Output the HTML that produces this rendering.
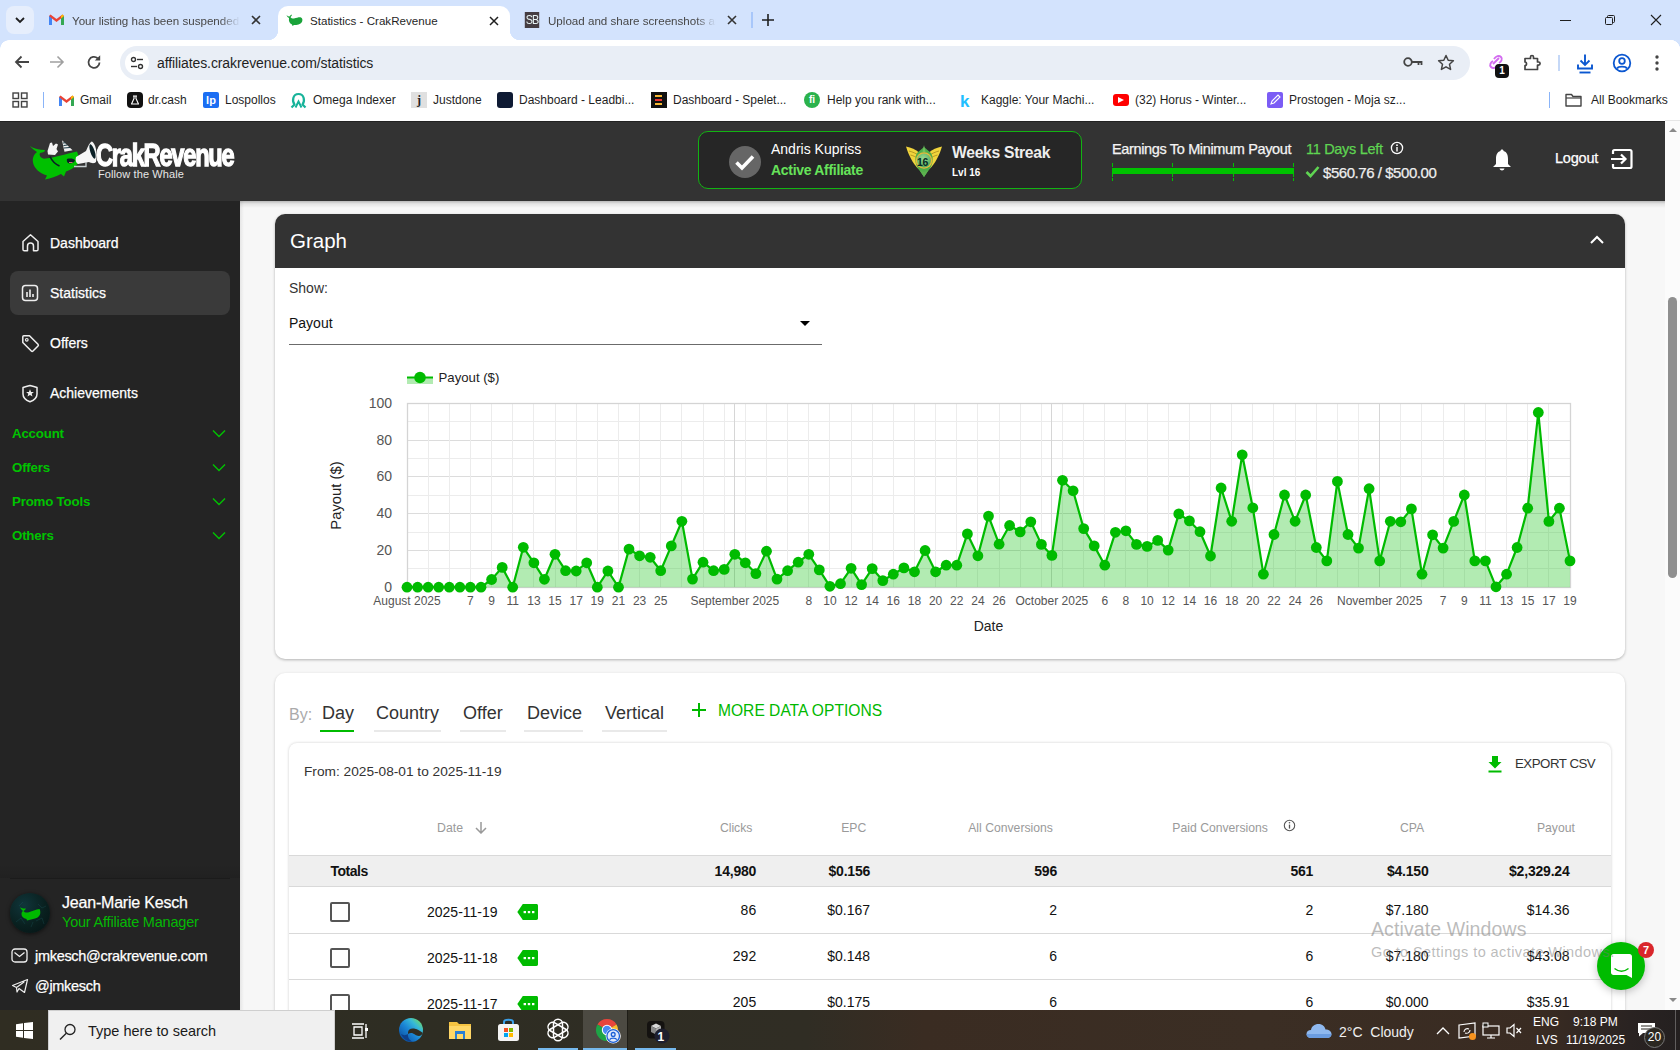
<!DOCTYPE html>
<html><head><meta charset="utf-8"><title>Statistics - CrakRevenue</title>
<style>
*{box-sizing:border-box;margin:0;padding:0}
html,body{width:1680px;height:1050px;overflow:hidden;font-family:"Liberation Sans",sans-serif;background:#f7f7f7}
.abs{position:absolute}
.t{position:absolute;white-space:nowrap;line-height:1}
#tabs{position:absolute;left:0;top:0;width:1680px;height:40px;background:#d3e3fd}
#toolbar{position:absolute;left:0;top:40px;width:1680px;height:44px;background:#fff}
#bm{position:absolute;left:0;top:84px;width:1680px;height:37px;background:#fff}
#hdr{position:absolute;left:0;top:121px;width:1665px;height:80px;background:#333;border-top:1px solid #222;z-index:2}
#side{position:absolute;left:0;top:200px;width:240px;height:810px;background:#242424}
#main{position:absolute;left:240px;top:200px;width:1425px;height:810px;background:#f7f7f7;overflow:hidden}
#sb{position:absolute;left:1665px;top:120px;width:15px;height:890px;background:#fbfbfb;border-top:1px solid #e6e6e6}
#task{position:absolute;left:0;top:1010px;width:1680px;height:40px;background:linear-gradient(90deg,#302d22 0%,#2e2d23 25%,#302d24 48%,#3a2c22 55%,#3b2e24 75%,#392b22 92%,#2a2322 97%,#242020 100%)}
.tabtxt{font-size:11.6px;color:#1f1f1f}
.bmt{font-size:12px;color:#1f1f1f}
.wh{color:#fff}
.grn{color:#00b400}
.med{-webkit-text-stroke:0.25px currentColor}
</style></head><body>

<div id="tabs">
  <div class="abs" style="left:6px;top:6px;width:28px;height:28px;border-radius:8px;background:#e6eefc"></div>
  <svg class="abs" style="left:13px;top:13px" width="14" height="14" viewBox="0 0 14 14"><path d="M3 5 L7 9 L11 5" fill="none" stroke="#1f1f1f" stroke-width="1.8"/></svg>
  <!-- tab1 -->
  <svg class="abs" style="left:49px;top:14px" width="15" height="12" viewBox="0 0 15 12"><path d="M0 2v9h3V4.5L7.5 8 12 4.5V11h3V2l-1.5-1.5L7.5 5 1.5.5z" fill="#ea4335"/><path d="M0 2v9h3V4.5z" fill="#4285f4"/><path d="M12 4.5V11h3V2z" fill="#34a853"/><path d="M12 4.5L15 2 13.5.5 12 1.7z" fill="#fbbc04"/></svg>
  <div class="t tabtxt" style="left:72px;top:15px;color:#474747;width:168px;overflow:hidden;-webkit-mask-image:linear-gradient(90deg,#000 88%,transparent)">Your listing has been suspended</div>
  <svg class="abs" style="left:250px;top:14px" width="12" height="12" viewBox="0 0 12 12"><path d="M2 2L10 10M10 2L2 10" stroke="#333" stroke-width="1.6"/></svg>
  <!-- active tab -->
  <div class="abs" style="left:278px;top:6px;width:232px;height:40px;background:#fff;border-radius:10px 10px 0 0"></div>
  <div class="abs" style="left:268px;top:30px;width:10px;height:10px;background:radial-gradient(circle at 0 0,#d3e3fd 10px,#fff 10.5px)"></div>
  <div class="abs" style="left:510px;top:30px;width:10px;height:10px;background:radial-gradient(circle at 100% 0,#d3e3fd 10px,#fff 10.5px)"></div>
  <svg class="abs" style="left:286px;top:14px" width="17" height="12" viewBox="0 0 17 12"><path d="M0.5 1 C1.5 2 2.5 2.5 3.5 2.5 C4.5 1 5.5 0.5 6 1 C5.5 2 5 2.5 4.5 3 C5 4 6 4.5 8 4.5 C11 4 13 3 15 3.5 C16.5 4 16.8 6 16 8 C14.5 10.5 11 11 8 11 L6.5 12 L6 10.5 C3.5 9.5 2.5 7 3 4 C2 3.5 1 2.5 0.5 1Z" fill="#1aa33a"/></svg>
  <div class="t tabtxt" style="left:310px;top:15px">Statistics - CrakRevenue</div>
  <svg class="abs" style="left:488px;top:15px" width="12" height="12" viewBox="0 0 12 12"><path d="M2 2L10 10M10 2L2 10" stroke="#1f1f1f" stroke-width="1.5"/></svg>
  <!-- tab3 -->
  <div class="abs" style="left:524px;top:12px;width:16px;height:16px;background:#453d42;color:#e8f4f4;font:12px 'Liberation Sans',sans-serif;line-height:16px;text-align:center;letter-spacing:-1.2px;transform:scaleX(0.9)">SB</div>
  <div class="t tabtxt" style="left:548px;top:15px;color:#474747;width:168px;overflow:hidden;-webkit-mask-image:linear-gradient(90deg,#000 88%,transparent)">Upload and share screenshots and images</div>
  <svg class="abs" style="left:726px;top:14px" width="12" height="12" viewBox="0 0 12 12"><path d="M2 2L10 10M10 2L2 10" stroke="#333" stroke-width="1.6"/></svg>
  <div class="abs" style="left:751px;top:12px;width:1.5px;height:16px;background:#a8c7fa"></div>
  <svg class="abs" style="left:761px;top:13px" width="14" height="14" viewBox="0 0 14 14"><path d="M7 1V13M1 7H13" stroke="#1f1f1f" stroke-width="1.6"/></svg>
  <!-- window controls -->
  <div class="abs" style="left:1560px;top:20px;width:11px;height:1px;background:#1f1f1f"></div>
  <svg class="abs" style="left:1604px;top:14px" width="12" height="12" viewBox="0 0 12 12"><rect x="1.5" y="3.5" width="7" height="7" rx="1" fill="none" stroke="#1f1f1f"/><path d="M3.5 3.5V2.5a1 1 0 0 1 1-1h5a1 1 0 0 1 1 1v5a1 1 0 0 1-1 1h-1" fill="none" stroke="#1f1f1f"/></svg>
  <svg class="abs" style="left:1650px;top:14px" width="12" height="12" viewBox="0 0 12 12"><path d="M1 1L11 11M11 1L1 11" stroke="#1f1f1f" stroke-width="1.1"/></svg>
</div>
<div id="toolbar">
  <div class="abs" style="left:0;top:0;width:9px;height:9px;background:radial-gradient(circle at 100% 100%,#fff 8.5px,#d3e3fd 9px)"></div>
  <div class="abs" style="left:1670px;top:0;width:10px;height:10px;background:radial-gradient(circle at 0 100%,#fff 10px,#d3e3fd 10.5px)"></div>
  <svg class="abs" style="left:13px;top:13px" width="18" height="18" viewBox="0 0 18 18"><path d="M16 9H3M8.5 3.5L3 9l5.5 5.5" fill="none" stroke="#444" stroke-width="1.8"/></svg>
  <svg class="abs" style="left:48px;top:13px" width="18" height="18" viewBox="0 0 18 18"><path d="M2 9H15M9.5 3.5L15 9l-5.5 5.5" fill="none" stroke="#a0a0a0" stroke-width="1.6"/></svg>
  <svg class="abs" style="left:85px;top:13px" width="18" height="18" viewBox="0 0 18 18"><path d="M14.5 9.5A5.5 5.5 0 1 1 12.6 5.2" fill="none" stroke="#444" stroke-width="1.8"/><path d="M15.2 2.2V7.6H9.8Z" fill="#444"/></svg>
  <div class="abs" style="left:120px;top:6px;width:1350px;height:34px;border-radius:17px;background:#e9eef6"></div>
  <div class="abs" style="left:125px;top:11px;width:24px;height:24px;border-radius:12px;background:#fff"></div>
  <svg class="abs" style="left:130px;top:16px" width="14" height="14" viewBox="0 0 14 14"><circle cx="3.5" cy="3.5" r="2" fill="none" stroke="#333" stroke-width="1.4"/><path d="M7 3.5H13" stroke="#333" stroke-width="1.4"/><path d="M1 10.5H7" stroke="#333" stroke-width="1.4"/><circle cx="10.5" cy="10.5" r="2" fill="none" stroke="#333" stroke-width="1.4"/></svg>
  <div class="t" style="left:157px;top:16px;font-size:14px;color:#1f1f1f;letter-spacing:-0.1px">affiliates.crakrevenue.com/statistics</div>
  <svg class="abs" style="left:1403px;top:15px" width="20" height="14" viewBox="0 0 20 14"><circle cx="5" cy="7" r="3.8" fill="none" stroke="#444" stroke-width="1.8"/><path d="M9 7H18.5V10M15.5 7V10" fill="none" stroke="#444" stroke-width="1.8"/></svg>
  <svg class="abs" style="left:1437px;top:14px" width="18" height="18" viewBox="0 0 18 18"><path d="M9 1.5l2.2 4.8 5.2.5-3.9 3.5 1.1 5.1L9 12.8 4.4 15.4l1.1-5.1L1.6 6.8l5.2-.5z" fill="none" stroke="#444" stroke-width="1.5" stroke-linejoin="round"/></svg>
  <svg class="abs" style="left:1487px;top:14px" width="18" height="16" viewBox="0 0 18 16"><path d="M7 5 C9 2 12 1 14 3 C16 5 14 8 12 9 M11 11 C9 14 6 15 4 13 C2 11 4 8 6 7 M6 10 L12 4" fill="none" stroke="#d36cf0" stroke-width="1.9"/></svg>
  <div class="abs" style="left:1495px;top:24px;width:14px;height:14px;background:#111;border-radius:4px;color:#fff;font:bold 10px 'Liberation Sans';line-height:14px;text-align:center">1</div>
  <svg class="abs" style="left:1522px;top:13px" width="20" height="20" viewBox="0 0 20 20"><path d="M3 5.5H8.5V4A1.5 1.5 0 0 1 11.5 4V5.5H15.5V9H16.5A1.6 1.6 0 0 1 16.5 12.2H15.5V16.5H3V12.5C5 12.5 5 9 3 9Z" fill="none" stroke="#444" stroke-width="1.7" stroke-linejoin="round"/></svg>
  <div class="abs" style="left:1558px;top:15px;width:1.5px;height:16px;background:#c5d8f7"></div>
  <svg class="abs" style="left:1575px;top:13px" width="20" height="22" viewBox="0 0 20 22"><path d="M10 1.5V12M5.5 7.5L10 12 14.5 7.5" fill="none" stroke="#0b57d0" stroke-width="1.9"/><path d="M3 11.5V15.5H17V11.5" fill="none" stroke="#0b57d0" stroke-width="1.9"/><path d="M4.5 19.5H15.5" stroke="#0b57d0" stroke-width="1.9"/></svg>
  <svg class="abs" style="left:1612px;top:13px" width="20" height="20" viewBox="0 0 20 20"><circle cx="10" cy="10" r="8.3" fill="none" stroke="#0b57d0" stroke-width="1.8"/><circle cx="10" cy="8" r="2.8" fill="none" stroke="#0b57d0" stroke-width="1.8"/><path d="M5 15.5C6.5 13 13.5 13 15 15.5" fill="none" stroke="#0b57d0" stroke-width="1.8"/></svg>
  <svg class="abs" style="left:1654px;top:14px" width="6" height="18" viewBox="0 0 6 18"><circle cx="3" cy="3" r="1.7" fill="#444"/><circle cx="3" cy="9" r="1.7" fill="#444"/><circle cx="3" cy="15" r="1.7" fill="#444"/></svg>
</div>
<div id="bm">
  <svg class="abs" style="left:12px;top:8px" width="16" height="16" viewBox="0 0 16 16"><rect x="1" y="1" width="5.5" height="5.5" fill="none" stroke="#444" stroke-width="1.4"/><rect x="9.5" y="1" width="5.5" height="5.5" fill="none" stroke="#444" stroke-width="1.4"/><rect x="1" y="9.5" width="5.5" height="5.5" fill="none" stroke="#444" stroke-width="1.4"/><rect x="9.5" y="9.5" width="5.5" height="5.5" fill="none" stroke="#444" stroke-width="1.4"/></svg>
  <div class="abs" style="left:43px;top:8px;width:1px;height:16px;background:#8ab4f8"></div>
  <svg class="abs" style="left:59px;top:11px" width="15" height="12" viewBox="0 0 15 12"><path d="M0 2v9h3V4.5L7.5 8 12 4.5V11h3V2l-1.5-1.5L7.5 5 1.5.5z" fill="#ea4335"/><path d="M0 2v9h3V4.5z" fill="#4285f4"/><path d="M12 4.5V11h3V2z" fill="#34a853"/><path d="M12 4.5L15 2 13.5.5 12 1.7z" fill="#fbbc04"/></svg>
  <div class="t bmt" style="left:80px;top:10px">Gmail</div>
  <div class="abs" style="left:127px;top:8px;width:16px;height:16px;border-radius:4px;background:#111"></div>
  <svg class="abs" style="left:130px;top:11px" width="10" height="10" viewBox="0 0 10 10"><path d="M3 1H7 M4 1V3.5 L1.5 9H8.5 L6 3.5V1" stroke="#fff" stroke-width="1.1" fill="none" stroke-linejoin="round"/></svg>
  <div class="t bmt" style="left:148px;top:10px">dr.cash</div>
  <div class="abs" style="left:203px;top:8px;width:16px;height:16px;border-radius:2px;background:#1b6ef3;color:#fff;font:bold 11px 'Liberation Sans';line-height:16px;text-align:center">lp</div>
  <div class="t bmt" style="left:225px;top:10px">Lospollos</div>
  <svg class="abs" style="left:290px;top:8px" width="17" height="17" viewBox="0 0 17 17"><path d="M1.5 15.5 L4.5 12.5 C2 9.5 2.5 2 8.5 2 C14.5 2 15 9.5 12.5 12.5 L15.5 15.5" fill="none" stroke="#17b39a" stroke-width="2.2" stroke-linejoin="round"/><path d="M5.5 15.5 L8.5 9.5 L11.5 15.5" fill="none" stroke="#17b39a" stroke-width="2"/></svg>
  <div class="t bmt" style="left:313px;top:10px">Omega Indexer</div>
  <div class="abs" style="left:411px;top:8px;width:16px;height:16px;background:#e0e0e0;color:#222;font:bold 12px 'Liberation Serif';line-height:16px;text-align:center">j</div>
  <div class="t bmt" style="left:433px;top:10px">Justdone</div>
  <div class="abs" style="left:497px;top:8px;width:16px;height:16px;border-radius:3px;background:#0e1a33"></div>
  <div class="t bmt" style="left:519px;top:10px">Dashboard - Leadbi...</div>
  <div class="abs" style="left:651px;top:8px;width:16px;height:16px;background:#111"></div>
  <div class="abs" style="left:655px;top:11px;width:7px;height:2px;background:#f5b731"></div>
  <div class="abs" style="left:655px;top:15px;width:7px;height:2px;background:#e33"></div>
  <div class="abs" style="left:655px;top:19px;width:7px;height:2px;background:#f5b731"></div>
  <div class="t bmt" style="left:673px;top:10px">Dashboard - Spelet...</div>
  <div class="abs" style="left:804px;top:8px;width:16px;height:16px;border-radius:8px;background:#2bb24c;color:#fff;font:bold 10px 'Liberation Sans';line-height:16px;text-align:center">fi</div>
  <div class="t bmt" style="left:827px;top:10px">Help you rank with...</div>
  <div class="t" style="left:960px;top:8px;font:bold 17px 'Liberation Sans';color:#20beff">k</div>
  <div class="t bmt" style="left:981px;top:10px">Kaggle: Your Machi...</div>
  <div class="abs" style="left:1113px;top:10px;width:16px;height:12px;border-radius:3px;background:#f00"></div>
  <svg class="abs" style="left:1118px;top:13px" width="6" height="6" viewBox="0 0 6 6"><path d="M0 0L6 3L0 6z" fill="#fff"/></svg>
  <div class="t bmt" style="left:1135px;top:10px">(32) Horus - Winter...</div>
  <div class="abs" style="left:1267px;top:8px;width:16px;height:16px;border-radius:2px;background:#7b5cf5"></div>
  <svg class="abs" style="left:1269px;top:10px" width="12" height="12" viewBox="0 0 12 12"><path d="M2 10L3 7L9 1L11 3L5 9Z" fill="none" stroke="#fff" stroke-width="1.1"/></svg>
  <div class="t bmt" style="left:1289px;top:10px">Prostogen - Moja sz...</div>
  <div class="abs" style="left:1549px;top:8px;width:1px;height:16px;background:#8ab4f8"></div>
  <svg class="abs" style="left:1565px;top:9px" width="17" height="14" viewBox="0 0 17 14"><path d="M1 1.5H6.5L8 3.5H16V13H1z" fill="none" stroke="#444" stroke-width="1.4" stroke-linejoin="round"/><path d="M1 5H16" stroke="#444" stroke-width="1.2"/></svg>
  <div class="t bmt" style="left:1591px;top:10px">All Bookmarks</div>
</div>

<div id="hdr">
  <!-- logo whale -->
  <svg class="abs" style="left:28px;top:18px" width="72" height="42" viewBox="0 0 72 42">
    <path d="M2 6 C5 8 9 9.5 13 9.8 L17 10 C17 12 15 12.5 12 13 C11 15 12 17.5 16 18.8 C25 18 38 14 49 11.5 C50.5 15 51 20 50 23.5 C46 28 42 30 38 31.5 L36 36.5 L33 34 C28 36.5 23 38.5 17 39.5 L19 35.5 C11 33 6 28 5 22.5 C4 17 7 13.5 9 12 C6 10 3.5 8 2 6Z" fill="#00c000"/>
    <path d="M22 16.5 C24 21 27 24 31.5 26" fill="none" stroke="#0a1e24" stroke-width="1.6"/>
    <path d="M39 19 C42 18 46 18.5 47 20.5 C46 23 42 24 40 23 C39 22 38.5 20.5 39 19Z" fill="#0a1e24"/>
    <path d="M41 22.5 L44.5 22.5" stroke="#d06a7a" stroke-width="1"/>
    <path d="M34 0.3 L44.6 10.3 L36.5 11.7 Z" fill="#f0f0f0"/>
    <path d="M35 3 L37.5 2.8 M35.5 5.5 L39.5 5 M36 8 L42 7.5" stroke="#1a3a44" stroke-width="1.1"/>
    <path d="M22 3 L24 2.5 L25 6 L28 3.5 L30 4.5 L28.5 9 L30 11.5 L27 15 L20 14.5 L19.5 11 Z" fill="#f4f4f4"/>
    <path d="M48 17 L58 11 C60 6 62 2 64 1.5 C67 3 70 12 68 22 C66 24 63 23 61 22 L50 24 C48 23 47 20 48 17Z" fill="#f6f6f6"/>
    <ellipse cx="64.5" cy="11.5" rx="2.2" ry="7.5" transform="rotate(-18 64.5 11.5)" fill="#0d2228"/>
    <path d="M46 26.5 L58 26.5 L58 22" fill="none" stroke="#c8d0d2" stroke-width="1.3"/>
  </svg>
  <div class="t" style="left:96px;top:16px;font:bold 30.5px 'Liberation Sans',sans-serif;color:#fff;transform:scaleX(0.775);transform-origin:0 0;letter-spacing:-1.6px;-webkit-text-stroke:1.3px #fff">CrakRevenue</div>
  <div class="t" style="left:98px;top:46.5px;font-size:11px;color:#e6e6e6;letter-spacing:0.1px">Follow the Whale</div>
  <!-- affiliate box -->
  <div class="abs" style="left:698px;top:9px;width:384px;height:58px;border:1.5px solid #12b312;border-radius:10px;background:#262626"></div>
  <div class="abs" style="left:729px;top:24px;width:32px;height:32px;border-radius:16px;background:#666"></div>
  <svg class="abs" style="left:734px;top:30px" width="22" height="20" viewBox="0 0 22 20"><path d="M2.5 10.5 L8 16 L19 4.5" fill="none" stroke="#fff" stroke-width="3.6"/></svg>
  <div class="t" style="left:771px;top:20px;font-size:14px;color:#fff">Andris Kupriss</div>
  <div class="t" style="left:771px;top:40px;font:bold 14px 'Liberation Sans';color:#66e35a;letter-spacing:-0.3px">Active Affiliate</div>
  <!-- badge -->
  <svg class="abs" style="left:905px;top:18px" width="38" height="40" viewBox="0 0 38 40">
    <defs><radialGradient id="bg16" cx="0.45" cy="0.35" r="0.7"><stop offset="0" stop-color="#9ad98f"/><stop offset="1" stop-color="#4fa85a"/></radialGradient></defs>
    <path d="M1 6.5 C6 7.5 11 9.5 14 12.5 L16 21 L13.5 29 C8 24 3.5 15 1 6.5Z" fill="#f1d43c"/>
    <path d="M37 6.5 C32 7.5 27 9.5 24 12.5 L22 21 L24.5 29 C30 24 34.5 15 37 6.5Z" fill="#f1d43c"/>
    <path d="M4 11 C8 12 11 13.5 13 15 M5.5 15 C9 16 11 17 13 18.5 M34 11 C30 12 27 13.5 25 15 M32.5 15 C29 16 27 17 25 18.5" fill="none" stroke="#b99a22" stroke-width="1"/>
    <path d="M12 13 C9 18 10 26 15 31 L19 37 L23 31 C28 26 29 18 26 13 L19 7 Z" fill="#4fae4a"/>
    <path d="M19 5 L20.5 12 L17.5 12Z" fill="#6fc25f"/>
    <circle cx="19" cy="20.5" r="8.3" fill="#e9b93a"/>
    <circle cx="19" cy="20.5" r="6.9" fill="url(#bg16)"/>
    <path d="M13 28 C15 33 23 33 25 28 L19 37Z" fill="#5cb24f"/>
  </svg>
  <div class="t" style="left:917px;top:34px;font:bold 10.5px 'Liberation Sans',sans-serif;color:#082a24;letter-spacing:-0.3px">16</div>
  <div class="t" style="left:952px;top:22px;font:bold 15.7px 'Liberation Sans';color:#eee;letter-spacing:-0.3px">Weeks Streak</div>
  <div class="t" style="left:952px;top:45px;font:bold 10px 'Liberation Sans';color:#fff">Lvl 16</div>
  <!-- earnings -->
  <div class="t med" style="left:1112px;top:20px;font-size:14.5px;color:#f4f4f4;letter-spacing:-0.35px">Earnings To Minimum Payout</div>
  <div class="abs" style="left:1112px;top:46px;width:182px;height:6px;background:#00c200"></div>
  <div class="abs" style="left:1112px;top:41px;width:1px;height:18px;background:repeating-linear-gradient(#00c200 0 4px,transparent 4px 5px)"></div>
  <div class="abs" style="left:1172px;top:41px;width:1px;height:18px;background:repeating-linear-gradient(#00c200 0 4px,transparent 4px 5px)"></div>
  <div class="abs" style="left:1233px;top:41px;width:1px;height:18px;background:repeating-linear-gradient(#00c200 0 4px,transparent 4px 5px)"></div>
  <div class="abs" style="left:1293px;top:41px;width:1px;height:18px;background:repeating-linear-gradient(#00c200 0 4px,transparent 4px 5px)"></div>
  <div class="t med" style="left:1306px;top:20px;font-size:14.5px;color:#5fd452;letter-spacing:-0.3px">11 Days Left</div>
  <svg class="abs" style="left:1390px;top:19px" width="14" height="14" viewBox="0 0 14 14"><circle cx="7" cy="7" r="5.6" fill="none" stroke="#fff" stroke-width="1.3"/><path d="M7 6V10.5" stroke="#fff" stroke-width="1.4"/><circle cx="7" cy="4.2" r="0.9" fill="#fff"/></svg>
  <svg class="abs" style="left:1305px;top:43px" width="15" height="13" viewBox="0 0 15 13"><path d="M1.5 7 L5.5 11 L13.5 2" fill="none" stroke="#5fd452" stroke-width="2.6"/></svg>
  <div class="t med" style="left:1323px;top:41.5px;font:15px 'Liberation Sans';color:#eee;letter-spacing:-0.45px">$560.76 / $500.00</div>
  <!-- bell -->
  <svg class="abs" style="left:1492px;top:26px" width="20" height="24" viewBox="0 0 20 24"><path d="M10 1.5 C11 1.5 11.5 2 11.5 3 C15 4 16 7 16 11 L16 16 L19 19 L1 19 L4 16 L4 11 C4 7 5 4 8.5 3 C8.5 2 9 1.5 10 1.5Z" fill="#fff"/><path d="M7.5 20.5 C8 23 12 23 12.5 20.5Z" fill="#fff"/></svg>
  <div class="t med" style="left:1555px;top:29px;font-size:14.5px;color:#fff;letter-spacing:-0.2px">Logout</div>
  <svg class="abs" style="left:1610px;top:26px" width="24" height="22" viewBox="0 0 24 22"><path d="M3 6 V3.5 C3 2.5 3.5 2 4.5 2 H20 C21 2 21.5 2.5 21.5 3.5 V18.5 C21.5 19.5 21 20 20 20 H4.5 C3.5 20 3 19.5 3 18.5 V16" fill="none" stroke="#fff" stroke-width="2.2"/><path d="M1 11 H15 M11 6.5 L15.5 11 L11 15.5" fill="none" stroke="#fff" stroke-width="2.2"/></svg>
</div>

<div id="sb">
  <svg class="abs" style="left:2.5px;top:5px" width="10" height="8" viewBox="0 0 10 8"><path d="M1 6L5 2L9 6Z" fill="#8a8a8a"/></svg>
  <div class="abs" style="left:3px;top:176px;width:9px;height:281px;border-radius:4.5px;background:#8f8f8f"></div>
  <svg class="abs" style="left:2.5px;top:875px" width="10" height="8" viewBox="0 0 10 8"><path d="M1 2L5 6L9 2Z" fill="#8a8a8a"/></svg>
</div>

<div id="side">
  <div class="abs" style="left:10px;top:71px;width:220px;height:44px;border-radius:8px;background:#3a3a3a"></div>
  <svg class="abs" style="left:21px;top:33px" width="19" height="19" viewBox="0 0 19 19"><path d="M2 8.5 L9.5 1.8 L17 8.5 V16.5 C17 17.3 16.5 17.8 15.7 17.8 H12.5 V13 C12.5 11 11 10 9.5 10 C8 10 6.5 11 6.5 13 V17.8 H3.3 C2.5 17.8 2 17.3 2 16.5Z" fill="none" stroke="#eee" stroke-width="1.5" stroke-linejoin="round"/></svg>
  <div class="t med" style="left:50px;top:35.5px;font-size:14px;color:#fff;letter-spacing:0px">Dashboard</div>
  <svg class="abs" style="left:21px;top:84px" width="18" height="18" viewBox="0 0 18 18"><rect x="1.5" y="1.5" width="15" height="15" rx="3" fill="none" stroke="#eee" stroke-width="1.5"/><path d="M6 13V8M9 13V5.5M12 13V10" stroke="#eee" stroke-width="1.6"/></svg>
  <div class="t med" style="left:50px;top:85.5px;font-size:14px;color:#fff;letter-spacing:0px">Statistics</div>
  <svg class="abs" style="left:21px;top:134px" width="19" height="19" viewBox="0 0 19 19"><path d="M1.8 2.8 C1.8 2.2 2.2 1.8 2.8 1.8 H8.5 L17 10.3 C17.5 10.8 17.5 11.5 17 12 L12 17 C11.5 17.5 10.8 17.5 10.3 17 L1.8 8.5Z" fill="none" stroke="#eee" stroke-width="1.5" stroke-linejoin="round"/><circle cx="5.8" cy="5.8" r="1.3" fill="none" stroke="#eee" stroke-width="1.2"/></svg>
  <div class="t med" style="left:50px;top:135.5px;font-size:14px;color:#fff;letter-spacing:0px">Offers</div>
  <svg class="abs" style="left:21px;top:184px" width="18" height="19" viewBox="0 0 18 19"><path d="M2 3.5 C5 2.5 7 2 9 1.5 C11 2 13 2.5 16 3.5 V10 C16 14 12.5 16.5 9 17.8 C5.5 16.5 2 14 2 10Z" fill="none" stroke="#eee" stroke-width="1.5" stroke-linejoin="round"/><path d="M9 5.2 L10.1 7.9 L12.9 8 L10.7 9.8 L11.5 12.5 L9 11 L6.5 12.5 L7.3 9.8 L5.1 8 L7.9 7.9Z" fill="#eee"/></svg>
  <div class="t med" style="left:50px;top:185.5px;font-size:14px;color:#fff;letter-spacing:0px">Achievements</div>
  <div class="t" style="left:12px;top:225.5px;font:bold 13.3px 'Liberation Sans';color:#00c300;letter-spacing:-0.2px">Account</div>
  <div class="t" style="left:12px;top:259.5px;font:bold 13.3px 'Liberation Sans';color:#00c300;letter-spacing:-0.2px">Offers</div>
  <div class="t" style="left:12px;top:293.5px;font:bold 13.3px 'Liberation Sans';color:#00c300;letter-spacing:-0.2px">Promo Tools</div>
  <div class="t" style="left:12px;top:327.5px;font:bold 13.3px 'Liberation Sans';color:#00c300;letter-spacing:-0.2px">Others</div>
  <svg class="abs" style="left:212px;top:229px" width="14" height="9" viewBox="0 0 14 9"><path d="M1 1.5 L7 7.5 L13 1.5" fill="none" stroke="#00c300" stroke-width="1.4"/></svg>
  <svg class="abs" style="left:212px;top:263px" width="14" height="9" viewBox="0 0 14 9"><path d="M1 1.5 L7 7.5 L13 1.5" fill="none" stroke="#00c300" stroke-width="1.4"/></svg>
  <svg class="abs" style="left:212px;top:297px" width="14" height="9" viewBox="0 0 14 9"><path d="M1 1.5 L7 7.5 L13 1.5" fill="none" stroke="#00c300" stroke-width="1.4"/></svg>
  <svg class="abs" style="left:212px;top:331px" width="14" height="9" viewBox="0 0 14 9"><path d="M1 1.5 L7 7.5 L13 1.5" fill="none" stroke="#00c300" stroke-width="1.4"/></svg>
  <div class="abs" style="left:0;top:664px;width:240px;height:14px;background:linear-gradient(rgba(0,0,0,0),rgba(0,0,0,0.1))"></div>
  <div class="abs" style="left:10px;top:678px;width:220px;height:1px;background:#1b1b1b"></div>
  <div class="abs" style="left:10px;top:693px;width:40px;height:40px;border-radius:20px;background:radial-gradient(circle at 35% 30%,#10353a,#09201f 55%,#051113);box-shadow:0 1px 4px rgba(0,0,0,.6)"></div>
  <svg class="abs" style="left:11px;top:694px" width="38" height="38" viewBox="0 0 38 38"><g stroke="#1f6066" stroke-width="0.8" fill="none" opacity="0.35"><path d="M5 28 L10 24 L14 30"/><path d="M27 10 L31 14 L35 12"/><path d="M25 27 L31 24 L33 30"/><path d="M8 12 L12 8"/><path d="M20 33 L22 28"/></g></svg>
  <svg class="abs" style="left:18px;top:706px" width="24" height="16" viewBox="0 0 24 16"><path d="M2 1.3 C3.5 2.5 6 2.8 8 2.5 C7.5 3.5 6.5 4.5 5.5 5 C6.5 6.5 8 6.8 10 6.5 C14 5.5 18 3.5 21.5 3 C22.5 4.5 22.5 7 22 8.5 C21 11 19 12 17 12.5 L13 13.5 L9 14.5 L8.5 13 C5 12 3.5 10.5 3.5 8 C3.5 6.5 4 5.5 5 5 C4 4 2.5 2.8 2 1.3Z" fill="#00b900"/></svg>
  <div class="t med" style="left:62px;top:695px;font-size:16px;color:#fff;letter-spacing:-0.2px">Jean-Marie Kesch</div>
  <div class="t" style="left:62px;top:715px;font-size:14.5px;color:#05b805;letter-spacing:-0.2px">Your Affiliate Manager</div>
  <svg class="abs" style="left:11px;top:748px" width="17" height="15" viewBox="0 0 17 15"><rect x="1" y="1" width="15" height="13" rx="3" fill="none" stroke="#eee" stroke-width="1.3"/><path d="M3.5 4.5 L8.5 8.5 L13.5 4.5" fill="none" stroke="#eee" stroke-width="1.3"/></svg>
  <div class="t med" style="left:35px;top:749px;font-size:14.5px;color:#fff;letter-spacing:-0.3px">jmkesch@crakrevenue.com</div>
  <svg class="abs" style="left:11px;top:778px" width="18" height="16" viewBox="0 0 18 16"><path d="M1.5 7.5 L16.5 1.5 L13.5 14.5 L8 10.5 L6 14 L5.5 9.5 L13 4 L5.5 9.5 Z" fill="none" stroke="#eee" stroke-width="1.2" stroke-linejoin="round"/></svg>
  <div class="t med" style="left:35px;top:779px;font-size:14.5px;color:#fff;letter-spacing:-0.3px">@jmkesch</div>
</div>

<div id="main"></div>
<!-- graph card -->
<div class="abs" style="left:275px;top:214px;width:1350px;height:445px;background:#fff;border-radius:10px;box-shadow:0 1px 3px rgba(0,0,0,0.28);overflow:hidden">
  <div class="abs" style="left:0;top:0;width:1350px;height:54px;background:#333"></div>
  <div class="t" style="left:15px;top:17px;font-size:20.5px;color:#fff">Graph</div>
  <svg class="abs" style="left:1314px;top:20px" width="16" height="12" viewBox="0 0 16 12"><path d="M2 9 L8 3 L14 9" fill="none" stroke="#fff" stroke-width="2"/></svg>
  <div class="t" style="left:14px;top:67px;font-size:14px;color:#333">Show:</div>
  <div class="t" style="left:14px;top:102px;font-size:14px;color:#111">Payout</div>
  <svg class="abs" style="left:524px;top:106px" width="12" height="7" viewBox="0 0 12 7"><path d="M1 1 L11 1 L6 6Z" fill="#000"/></svg>
  <div class="abs" style="left:14px;top:130px;width:533px;height:1px;background:#6b6b6b"></div>

<svg class="abs" style="left:0;top:54px" width="1350" height="391" viewBox="275 268 1350 391">
<line x1="407.0" y1="587.5" x2="1570.0" y2="587.5" stroke="#dcdcdc" stroke-width="1"/>
<line x1="407.0" y1="568.5" x2="1570.0" y2="568.5" stroke="#ececec" stroke-width="1"/>
<line x1="407.0" y1="550.5" x2="1570.0" y2="550.5" stroke="#dcdcdc" stroke-width="1"/>
<line x1="407.0" y1="532.5" x2="1570.0" y2="532.5" stroke="#ececec" stroke-width="1"/>
<line x1="407.0" y1="513.5" x2="1570.0" y2="513.5" stroke="#dcdcdc" stroke-width="1"/>
<line x1="407.0" y1="495.5" x2="1570.0" y2="495.5" stroke="#ececec" stroke-width="1"/>
<line x1="407.0" y1="476.5" x2="1570.0" y2="476.5" stroke="#dcdcdc" stroke-width="1"/>
<line x1="407.0" y1="458.5" x2="1570.0" y2="458.5" stroke="#ececec" stroke-width="1"/>
<line x1="407.0" y1="440.5" x2="1570.0" y2="440.5" stroke="#dcdcdc" stroke-width="1"/>
<line x1="407.0" y1="421.5" x2="1570.0" y2="421.5" stroke="#ececec" stroke-width="1"/>
<line x1="407.0" y1="403.5" x2="1570.0" y2="403.5" stroke="#dcdcdc" stroke-width="1"/>
<line x1="407.5" y1="403.5" x2="407.5" y2="587.2" stroke="#ececec" stroke-width="1"/>
<line x1="428.5" y1="403.5" x2="428.5" y2="587.2" stroke="#ececec" stroke-width="1"/>
<line x1="449.5" y1="403.5" x2="449.5" y2="587.2" stroke="#ececec" stroke-width="1"/>
<line x1="470.5" y1="403.5" x2="470.5" y2="587.2" stroke="#ececec" stroke-width="1"/>
<line x1="491.5" y1="403.5" x2="491.5" y2="587.2" stroke="#ececec" stroke-width="1"/>
<line x1="512.5" y1="403.5" x2="512.5" y2="587.2" stroke="#ececec" stroke-width="1"/>
<line x1="533.5" y1="403.5" x2="533.5" y2="587.2" stroke="#ececec" stroke-width="1"/>
<line x1="555.5" y1="403.5" x2="555.5" y2="587.2" stroke="#ececec" stroke-width="1"/>
<line x1="576.5" y1="403.5" x2="576.5" y2="587.2" stroke="#ececec" stroke-width="1"/>
<line x1="597.5" y1="403.5" x2="597.5" y2="587.2" stroke="#ececec" stroke-width="1"/>
<line x1="618.5" y1="403.5" x2="618.5" y2="587.2" stroke="#ececec" stroke-width="1"/>
<line x1="639.5" y1="403.5" x2="639.5" y2="587.2" stroke="#ececec" stroke-width="1"/>
<line x1="660.5" y1="403.5" x2="660.5" y2="587.2" stroke="#ececec" stroke-width="1"/>
<line x1="681.5" y1="403.5" x2="681.5" y2="587.2" stroke="#ececec" stroke-width="1"/>
<line x1="703.5" y1="403.5" x2="703.5" y2="587.2" stroke="#ececec" stroke-width="1"/>
<line x1="724.5" y1="403.5" x2="724.5" y2="587.2" stroke="#ececec" stroke-width="1"/>
<line x1="734.5" y1="403.5" x2="734.5" y2="587.2" stroke="#d6d6d6" stroke-width="1"/>
<line x1="745.5" y1="403.5" x2="745.5" y2="587.2" stroke="#ececec" stroke-width="1"/>
<line x1="766.5" y1="403.5" x2="766.5" y2="587.2" stroke="#ececec" stroke-width="1"/>
<line x1="787.5" y1="403.5" x2="787.5" y2="587.2" stroke="#ececec" stroke-width="1"/>
<line x1="808.5" y1="403.5" x2="808.5" y2="587.2" stroke="#ececec" stroke-width="1"/>
<line x1="829.5" y1="403.5" x2="829.5" y2="587.2" stroke="#ececec" stroke-width="1"/>
<line x1="851.5" y1="403.5" x2="851.5" y2="587.2" stroke="#ececec" stroke-width="1"/>
<line x1="872.5" y1="403.5" x2="872.5" y2="587.2" stroke="#ececec" stroke-width="1"/>
<line x1="893.5" y1="403.5" x2="893.5" y2="587.2" stroke="#ececec" stroke-width="1"/>
<line x1="914.5" y1="403.5" x2="914.5" y2="587.2" stroke="#ececec" stroke-width="1"/>
<line x1="935.5" y1="403.5" x2="935.5" y2="587.2" stroke="#ececec" stroke-width="1"/>
<line x1="956.5" y1="403.5" x2="956.5" y2="587.2" stroke="#ececec" stroke-width="1"/>
<line x1="977.5" y1="403.5" x2="977.5" y2="587.2" stroke="#ececec" stroke-width="1"/>
<line x1="999.5" y1="403.5" x2="999.5" y2="587.2" stroke="#ececec" stroke-width="1"/>
<line x1="1020.5" y1="403.5" x2="1020.5" y2="587.2" stroke="#ececec" stroke-width="1"/>
<line x1="1041.5" y1="403.5" x2="1041.5" y2="587.2" stroke="#ececec" stroke-width="1"/>
<line x1="1051.5" y1="403.5" x2="1051.5" y2="587.2" stroke="#d6d6d6" stroke-width="1"/>
<line x1="1062.5" y1="403.5" x2="1062.5" y2="587.2" stroke="#ececec" stroke-width="1"/>
<line x1="1083.5" y1="403.5" x2="1083.5" y2="587.2" stroke="#ececec" stroke-width="1"/>
<line x1="1104.5" y1="403.5" x2="1104.5" y2="587.2" stroke="#ececec" stroke-width="1"/>
<line x1="1125.5" y1="403.5" x2="1125.5" y2="587.2" stroke="#ececec" stroke-width="1"/>
<line x1="1147.5" y1="403.5" x2="1147.5" y2="587.2" stroke="#ececec" stroke-width="1"/>
<line x1="1168.5" y1="403.5" x2="1168.5" y2="587.2" stroke="#ececec" stroke-width="1"/>
<line x1="1189.5" y1="403.5" x2="1189.5" y2="587.2" stroke="#ececec" stroke-width="1"/>
<line x1="1210.5" y1="403.5" x2="1210.5" y2="587.2" stroke="#ececec" stroke-width="1"/>
<line x1="1231.5" y1="403.5" x2="1231.5" y2="587.2" stroke="#ececec" stroke-width="1"/>
<line x1="1252.5" y1="403.5" x2="1252.5" y2="587.2" stroke="#ececec" stroke-width="1"/>
<line x1="1273.5" y1="403.5" x2="1273.5" y2="587.2" stroke="#ececec" stroke-width="1"/>
<line x1="1295.5" y1="403.5" x2="1295.5" y2="587.2" stroke="#ececec" stroke-width="1"/>
<line x1="1316.5" y1="403.5" x2="1316.5" y2="587.2" stroke="#ececec" stroke-width="1"/>
<line x1="1337.5" y1="403.5" x2="1337.5" y2="587.2" stroke="#ececec" stroke-width="1"/>
<line x1="1358.5" y1="403.5" x2="1358.5" y2="587.2" stroke="#ececec" stroke-width="1"/>
<line x1="1379.5" y1="403.5" x2="1379.5" y2="587.2" stroke="#d6d6d6" stroke-width="1"/>
<line x1="1400.5" y1="403.5" x2="1400.5" y2="587.2" stroke="#ececec" stroke-width="1"/>
<line x1="1421.5" y1="403.5" x2="1421.5" y2="587.2" stroke="#ececec" stroke-width="1"/>
<line x1="1443.5" y1="403.5" x2="1443.5" y2="587.2" stroke="#ececec" stroke-width="1"/>
<line x1="1464.5" y1="403.5" x2="1464.5" y2="587.2" stroke="#ececec" stroke-width="1"/>
<line x1="1485.5" y1="403.5" x2="1485.5" y2="587.2" stroke="#ececec" stroke-width="1"/>
<line x1="1506.5" y1="403.5" x2="1506.5" y2="587.2" stroke="#ececec" stroke-width="1"/>
<line x1="1527.5" y1="403.5" x2="1527.5" y2="587.2" stroke="#ececec" stroke-width="1"/>
<line x1="1548.5" y1="403.5" x2="1548.5" y2="587.2" stroke="#ececec" stroke-width="1"/>
<line x1="1570.5" y1="403.5" x2="1570.5" y2="587.2" stroke="#ececec" stroke-width="1"/>
<rect x="407.5" y="403.5" width="1163" height="184" fill="none" stroke="#d4d4d4" stroke-width="1.3"/>
<polygon points="407.0,587.2 407.0,587.2 417.6,587.2 428.1,587.2 438.7,587.2 449.3,587.2 459.9,587.2 470.4,587.2 481.0,587.2 491.6,579.5 502.2,567.4 512.7,587.2 523.3,547.3 533.9,562.8 544.4,579.3 555.0,554.3 565.6,570.7 576.2,571.0 586.7,562.8 597.3,587.2 607.9,571.0 618.5,587.2 629.0,549.1 639.6,555.8 650.2,557.3 660.7,570.7 671.3,545.9 681.9,521.3 692.5,579.1 703.0,562.2 713.6,570.7 724.2,569.4 734.8,554.3 745.3,562.8 755.9,573.6 766.5,551.2 777.0,579.1 787.6,570.7 798.2,562.2 808.8,554.3 819.3,569.9 829.9,586.3 840.5,583.7 851.1,568.3 861.6,584.6 872.2,568.6 882.8,580.6 893.3,574.2 903.9,567.9 914.5,571.8 925.1,550.5 935.6,571.8 946.2,565.2 956.8,565.2 967.4,533.9 977.9,555.8 988.5,516.1 999.1,544.2 1009.6,525.5 1020.2,531.9 1030.8,521.8 1041.4,544.4 1051.9,555.4 1062.5,480.3 1073.1,490.8 1083.7,528.6 1094.2,545.9 1104.8,565.2 1115.4,532.3 1125.9,530.8 1136.5,544.4 1147.1,546.4 1157.7,540.4 1168.2,550.1 1178.8,513.9 1189.4,520.9 1200.0,531.7 1210.5,556.0 1221.1,488.0 1231.7,521.3 1242.2,454.8 1252.8,507.8 1263.4,574.2 1274.0,534.5 1284.5,495.0 1295.1,521.3 1305.7,495.0 1316.3,547.5 1326.8,560.9 1337.4,481.4 1348.0,534.5 1358.5,548.1 1369.1,488.7 1379.7,560.9 1390.3,521.3 1400.8,521.8 1411.4,508.9 1422.0,574.2 1432.6,534.8 1443.1,548.1 1453.7,521.4 1464.3,495.0 1474.8,560.9 1485.4,560.9 1496.0,586.8 1506.6,574.2 1517.1,547.5 1527.7,508.2 1538.3,412.5 1548.9,521.4 1559.4,508.2 1570.0,560.9 1570.0,587.2" fill="rgba(0,190,0,0.3)"/>
<polyline points="407.0,587.2 417.6,587.2 428.1,587.2 438.7,587.2 449.3,587.2 459.9,587.2 470.4,587.2 481.0,587.2 491.6,579.5 502.2,567.4 512.7,587.2 523.3,547.3 533.9,562.8 544.4,579.3 555.0,554.3 565.6,570.7 576.2,571.0 586.7,562.8 597.3,587.2 607.9,571.0 618.5,587.2 629.0,549.1 639.6,555.8 650.2,557.3 660.7,570.7 671.3,545.9 681.9,521.3 692.5,579.1 703.0,562.2 713.6,570.7 724.2,569.4 734.8,554.3 745.3,562.8 755.9,573.6 766.5,551.2 777.0,579.1 787.6,570.7 798.2,562.2 808.8,554.3 819.3,569.9 829.9,586.3 840.5,583.7 851.1,568.3 861.6,584.6 872.2,568.6 882.8,580.6 893.3,574.2 903.9,567.9 914.5,571.8 925.1,550.5 935.6,571.8 946.2,565.2 956.8,565.2 967.4,533.9 977.9,555.8 988.5,516.1 999.1,544.2 1009.6,525.5 1020.2,531.9 1030.8,521.8 1041.4,544.4 1051.9,555.4 1062.5,480.3 1073.1,490.8 1083.7,528.6 1094.2,545.9 1104.8,565.2 1115.4,532.3 1125.9,530.8 1136.5,544.4 1147.1,546.4 1157.7,540.4 1168.2,550.1 1178.8,513.9 1189.4,520.9 1200.0,531.7 1210.5,556.0 1221.1,488.0 1231.7,521.3 1242.2,454.8 1252.8,507.8 1263.4,574.2 1274.0,534.5 1284.5,495.0 1295.1,521.3 1305.7,495.0 1316.3,547.5 1326.8,560.9 1337.4,481.4 1348.0,534.5 1358.5,548.1 1369.1,488.7 1379.7,560.9 1390.3,521.3 1400.8,521.8 1411.4,508.9 1422.0,574.2 1432.6,534.8 1443.1,548.1 1453.7,521.4 1464.3,495.0 1474.8,560.9 1485.4,560.9 1496.0,586.8 1506.6,574.2 1517.1,547.5 1527.7,508.2 1538.3,412.5 1548.9,521.4 1559.4,508.2 1570.0,560.9" fill="none" stroke="#00bb00" stroke-width="2.2" stroke-linejoin="round"/>
<circle cx="407.0" cy="587.2" r="5.4" fill="#00bb00"/>
<circle cx="417.6" cy="587.2" r="5.4" fill="#00bb00"/>
<circle cx="428.1" cy="587.2" r="5.4" fill="#00bb00"/>
<circle cx="438.7" cy="587.2" r="5.4" fill="#00bb00"/>
<circle cx="449.3" cy="587.2" r="5.4" fill="#00bb00"/>
<circle cx="459.9" cy="587.2" r="5.4" fill="#00bb00"/>
<circle cx="470.4" cy="587.2" r="5.4" fill="#00bb00"/>
<circle cx="481.0" cy="587.2" r="5.4" fill="#00bb00"/>
<circle cx="491.6" cy="579.5" r="5.4" fill="#00bb00"/>
<circle cx="502.2" cy="567.4" r="5.4" fill="#00bb00"/>
<circle cx="512.7" cy="587.2" r="5.4" fill="#00bb00"/>
<circle cx="523.3" cy="547.3" r="5.4" fill="#00bb00"/>
<circle cx="533.9" cy="562.8" r="5.4" fill="#00bb00"/>
<circle cx="544.4" cy="579.3" r="5.4" fill="#00bb00"/>
<circle cx="555.0" cy="554.3" r="5.4" fill="#00bb00"/>
<circle cx="565.6" cy="570.7" r="5.4" fill="#00bb00"/>
<circle cx="576.2" cy="571.0" r="5.4" fill="#00bb00"/>
<circle cx="586.7" cy="562.8" r="5.4" fill="#00bb00"/>
<circle cx="597.3" cy="587.2" r="5.4" fill="#00bb00"/>
<circle cx="607.9" cy="571.0" r="5.4" fill="#00bb00"/>
<circle cx="618.5" cy="587.2" r="5.4" fill="#00bb00"/>
<circle cx="629.0" cy="549.1" r="5.4" fill="#00bb00"/>
<circle cx="639.6" cy="555.8" r="5.4" fill="#00bb00"/>
<circle cx="650.2" cy="557.3" r="5.4" fill="#00bb00"/>
<circle cx="660.7" cy="570.7" r="5.4" fill="#00bb00"/>
<circle cx="671.3" cy="545.9" r="5.4" fill="#00bb00"/>
<circle cx="681.9" cy="521.3" r="5.4" fill="#00bb00"/>
<circle cx="692.5" cy="579.1" r="5.4" fill="#00bb00"/>
<circle cx="703.0" cy="562.2" r="5.4" fill="#00bb00"/>
<circle cx="713.6" cy="570.7" r="5.4" fill="#00bb00"/>
<circle cx="724.2" cy="569.4" r="5.4" fill="#00bb00"/>
<circle cx="734.8" cy="554.3" r="5.4" fill="#00bb00"/>
<circle cx="745.3" cy="562.8" r="5.4" fill="#00bb00"/>
<circle cx="755.9" cy="573.6" r="5.4" fill="#00bb00"/>
<circle cx="766.5" cy="551.2" r="5.4" fill="#00bb00"/>
<circle cx="777.0" cy="579.1" r="5.4" fill="#00bb00"/>
<circle cx="787.6" cy="570.7" r="5.4" fill="#00bb00"/>
<circle cx="798.2" cy="562.2" r="5.4" fill="#00bb00"/>
<circle cx="808.8" cy="554.3" r="5.4" fill="#00bb00"/>
<circle cx="819.3" cy="569.9" r="5.4" fill="#00bb00"/>
<circle cx="829.9" cy="586.3" r="5.4" fill="#00bb00"/>
<circle cx="840.5" cy="583.7" r="5.4" fill="#00bb00"/>
<circle cx="851.1" cy="568.3" r="5.4" fill="#00bb00"/>
<circle cx="861.6" cy="584.6" r="5.4" fill="#00bb00"/>
<circle cx="872.2" cy="568.6" r="5.4" fill="#00bb00"/>
<circle cx="882.8" cy="580.6" r="5.4" fill="#00bb00"/>
<circle cx="893.3" cy="574.2" r="5.4" fill="#00bb00"/>
<circle cx="903.9" cy="567.9" r="5.4" fill="#00bb00"/>
<circle cx="914.5" cy="571.8" r="5.4" fill="#00bb00"/>
<circle cx="925.1" cy="550.5" r="5.4" fill="#00bb00"/>
<circle cx="935.6" cy="571.8" r="5.4" fill="#00bb00"/>
<circle cx="946.2" cy="565.2" r="5.4" fill="#00bb00"/>
<circle cx="956.8" cy="565.2" r="5.4" fill="#00bb00"/>
<circle cx="967.4" cy="533.9" r="5.4" fill="#00bb00"/>
<circle cx="977.9" cy="555.8" r="5.4" fill="#00bb00"/>
<circle cx="988.5" cy="516.1" r="5.4" fill="#00bb00"/>
<circle cx="999.1" cy="544.2" r="5.4" fill="#00bb00"/>
<circle cx="1009.6" cy="525.5" r="5.4" fill="#00bb00"/>
<circle cx="1020.2" cy="531.9" r="5.4" fill="#00bb00"/>
<circle cx="1030.8" cy="521.8" r="5.4" fill="#00bb00"/>
<circle cx="1041.4" cy="544.4" r="5.4" fill="#00bb00"/>
<circle cx="1051.9" cy="555.4" r="5.4" fill="#00bb00"/>
<circle cx="1062.5" cy="480.3" r="5.4" fill="#00bb00"/>
<circle cx="1073.1" cy="490.8" r="5.4" fill="#00bb00"/>
<circle cx="1083.7" cy="528.6" r="5.4" fill="#00bb00"/>
<circle cx="1094.2" cy="545.9" r="5.4" fill="#00bb00"/>
<circle cx="1104.8" cy="565.2" r="5.4" fill="#00bb00"/>
<circle cx="1115.4" cy="532.3" r="5.4" fill="#00bb00"/>
<circle cx="1125.9" cy="530.8" r="5.4" fill="#00bb00"/>
<circle cx="1136.5" cy="544.4" r="5.4" fill="#00bb00"/>
<circle cx="1147.1" cy="546.4" r="5.4" fill="#00bb00"/>
<circle cx="1157.7" cy="540.4" r="5.4" fill="#00bb00"/>
<circle cx="1168.2" cy="550.1" r="5.4" fill="#00bb00"/>
<circle cx="1178.8" cy="513.9" r="5.4" fill="#00bb00"/>
<circle cx="1189.4" cy="520.9" r="5.4" fill="#00bb00"/>
<circle cx="1200.0" cy="531.7" r="5.4" fill="#00bb00"/>
<circle cx="1210.5" cy="556.0" r="5.4" fill="#00bb00"/>
<circle cx="1221.1" cy="488.0" r="5.4" fill="#00bb00"/>
<circle cx="1231.7" cy="521.3" r="5.4" fill="#00bb00"/>
<circle cx="1242.2" cy="454.8" r="5.4" fill="#00bb00"/>
<circle cx="1252.8" cy="507.8" r="5.4" fill="#00bb00"/>
<circle cx="1263.4" cy="574.2" r="5.4" fill="#00bb00"/>
<circle cx="1274.0" cy="534.5" r="5.4" fill="#00bb00"/>
<circle cx="1284.5" cy="495.0" r="5.4" fill="#00bb00"/>
<circle cx="1295.1" cy="521.3" r="5.4" fill="#00bb00"/>
<circle cx="1305.7" cy="495.0" r="5.4" fill="#00bb00"/>
<circle cx="1316.3" cy="547.5" r="5.4" fill="#00bb00"/>
<circle cx="1326.8" cy="560.9" r="5.4" fill="#00bb00"/>
<circle cx="1337.4" cy="481.4" r="5.4" fill="#00bb00"/>
<circle cx="1348.0" cy="534.5" r="5.4" fill="#00bb00"/>
<circle cx="1358.5" cy="548.1" r="5.4" fill="#00bb00"/>
<circle cx="1369.1" cy="488.7" r="5.4" fill="#00bb00"/>
<circle cx="1379.7" cy="560.9" r="5.4" fill="#00bb00"/>
<circle cx="1390.3" cy="521.3" r="5.4" fill="#00bb00"/>
<circle cx="1400.8" cy="521.8" r="5.4" fill="#00bb00"/>
<circle cx="1411.4" cy="508.9" r="5.4" fill="#00bb00"/>
<circle cx="1422.0" cy="574.2" r="5.4" fill="#00bb00"/>
<circle cx="1432.6" cy="534.8" r="5.4" fill="#00bb00"/>
<circle cx="1443.1" cy="548.1" r="5.4" fill="#00bb00"/>
<circle cx="1453.7" cy="521.4" r="5.4" fill="#00bb00"/>
<circle cx="1464.3" cy="495.0" r="5.4" fill="#00bb00"/>
<circle cx="1474.8" cy="560.9" r="5.4" fill="#00bb00"/>
<circle cx="1485.4" cy="560.9" r="5.4" fill="#00bb00"/>
<circle cx="1496.0" cy="586.8" r="5.4" fill="#00bb00"/>
<circle cx="1506.6" cy="574.2" r="5.4" fill="#00bb00"/>
<circle cx="1517.1" cy="547.5" r="5.4" fill="#00bb00"/>
<circle cx="1527.7" cy="508.2" r="5.4" fill="#00bb00"/>
<circle cx="1538.3" cy="412.5" r="5.4" fill="#00bb00"/>
<circle cx="1548.9" cy="521.4" r="5.4" fill="#00bb00"/>
<circle cx="1559.4" cy="508.2" r="5.4" fill="#00bb00"/>
<circle cx="1570.0" cy="560.9" r="5.4" fill="#00bb00"/>
<text x="392" y="591.5" text-anchor="end" font-family="Liberation Sans" font-size="14" fill="#555">0</text>
<text x="392" y="554.8" text-anchor="end" font-family="Liberation Sans" font-size="14" fill="#555">20</text>
<text x="392" y="518.0" text-anchor="end" font-family="Liberation Sans" font-size="14" fill="#555">40</text>
<text x="392" y="481.3" text-anchor="end" font-family="Liberation Sans" font-size="14" fill="#555">60</text>
<text x="392" y="444.5" text-anchor="end" font-family="Liberation Sans" font-size="14" fill="#555">80</text>
<text x="392" y="407.8" text-anchor="end" font-family="Liberation Sans" font-size="14" fill="#555">100</text>
<text x="470.4" y="605" text-anchor="middle" font-family="Liberation Sans" font-size="12" fill="#555">7</text>
<text x="491.6" y="605" text-anchor="middle" font-family="Liberation Sans" font-size="12" fill="#555">9</text>
<text x="512.7" y="605" text-anchor="middle" font-family="Liberation Sans" font-size="12" fill="#555">11</text>
<text x="533.9" y="605" text-anchor="middle" font-family="Liberation Sans" font-size="12" fill="#555">13</text>
<text x="555.0" y="605" text-anchor="middle" font-family="Liberation Sans" font-size="12" fill="#555">15</text>
<text x="576.2" y="605" text-anchor="middle" font-family="Liberation Sans" font-size="12" fill="#555">17</text>
<text x="597.3" y="605" text-anchor="middle" font-family="Liberation Sans" font-size="12" fill="#555">19</text>
<text x="618.5" y="605" text-anchor="middle" font-family="Liberation Sans" font-size="12" fill="#555">21</text>
<text x="639.6" y="605" text-anchor="middle" font-family="Liberation Sans" font-size="12" fill="#555">23</text>
<text x="660.7" y="605" text-anchor="middle" font-family="Liberation Sans" font-size="12" fill="#555">25</text>
<text x="808.8" y="605" text-anchor="middle" font-family="Liberation Sans" font-size="12" fill="#555">8</text>
<text x="829.9" y="605" text-anchor="middle" font-family="Liberation Sans" font-size="12" fill="#555">10</text>
<text x="851.1" y="605" text-anchor="middle" font-family="Liberation Sans" font-size="12" fill="#555">12</text>
<text x="872.2" y="605" text-anchor="middle" font-family="Liberation Sans" font-size="12" fill="#555">14</text>
<text x="893.3" y="605" text-anchor="middle" font-family="Liberation Sans" font-size="12" fill="#555">16</text>
<text x="914.5" y="605" text-anchor="middle" font-family="Liberation Sans" font-size="12" fill="#555">18</text>
<text x="935.6" y="605" text-anchor="middle" font-family="Liberation Sans" font-size="12" fill="#555">20</text>
<text x="956.8" y="605" text-anchor="middle" font-family="Liberation Sans" font-size="12" fill="#555">22</text>
<text x="977.9" y="605" text-anchor="middle" font-family="Liberation Sans" font-size="12" fill="#555">24</text>
<text x="999.1" y="605" text-anchor="middle" font-family="Liberation Sans" font-size="12" fill="#555">26</text>
<text x="1104.8" y="605" text-anchor="middle" font-family="Liberation Sans" font-size="12" fill="#555">6</text>
<text x="1125.9" y="605" text-anchor="middle" font-family="Liberation Sans" font-size="12" fill="#555">8</text>
<text x="1147.1" y="605" text-anchor="middle" font-family="Liberation Sans" font-size="12" fill="#555">10</text>
<text x="1168.2" y="605" text-anchor="middle" font-family="Liberation Sans" font-size="12" fill="#555">12</text>
<text x="1189.4" y="605" text-anchor="middle" font-family="Liberation Sans" font-size="12" fill="#555">14</text>
<text x="1210.5" y="605" text-anchor="middle" font-family="Liberation Sans" font-size="12" fill="#555">16</text>
<text x="1231.7" y="605" text-anchor="middle" font-family="Liberation Sans" font-size="12" fill="#555">18</text>
<text x="1252.8" y="605" text-anchor="middle" font-family="Liberation Sans" font-size="12" fill="#555">20</text>
<text x="1274.0" y="605" text-anchor="middle" font-family="Liberation Sans" font-size="12" fill="#555">22</text>
<text x="1295.1" y="605" text-anchor="middle" font-family="Liberation Sans" font-size="12" fill="#555">24</text>
<text x="1316.3" y="605" text-anchor="middle" font-family="Liberation Sans" font-size="12" fill="#555">26</text>
<text x="1443.1" y="605" text-anchor="middle" font-family="Liberation Sans" font-size="12" fill="#555">7</text>
<text x="1464.3" y="605" text-anchor="middle" font-family="Liberation Sans" font-size="12" fill="#555">9</text>
<text x="1485.4" y="605" text-anchor="middle" font-family="Liberation Sans" font-size="12" fill="#555">11</text>
<text x="1506.6" y="605" text-anchor="middle" font-family="Liberation Sans" font-size="12" fill="#555">13</text>
<text x="1527.7" y="605" text-anchor="middle" font-family="Liberation Sans" font-size="12" fill="#555">15</text>
<text x="1548.9" y="605" text-anchor="middle" font-family="Liberation Sans" font-size="12" fill="#555">17</text>
<text x="1570.0" y="605" text-anchor="middle" font-family="Liberation Sans" font-size="12" fill="#555">19</text>
<text x="407.0" y="605" text-anchor="middle" font-family="Liberation Sans" font-size="12" fill="#555">August 2025</text>
<text x="734.8" y="605" text-anchor="middle" font-family="Liberation Sans" font-size="12" fill="#555">September 2025</text>
<text x="1051.9" y="605" text-anchor="middle" font-family="Liberation Sans" font-size="12" fill="#555">October 2025</text>
<text x="1379.7" y="605" text-anchor="middle" font-family="Liberation Sans" font-size="12" fill="#555">November 2025</text>
<text x="988.5" y="630.8" text-anchor="middle" font-family="Liberation Sans" font-size="14" fill="#222">Date</text>
<text transform="translate(341 495.5) rotate(-90)" text-anchor="middle" font-family="Liberation Sans" font-size="14.8" fill="#222">Payout ($)</text>
<rect x="407" y="377" width="26" height="7" fill="rgba(0,190,0,0.3)"/>
<line x1="407" y1="377.5" x2="433" y2="377.5" stroke="#00bb00" stroke-width="2"/>
<circle cx="420" cy="377.5" r="5.8" fill="#00bb00"/>
<text x="438.5" y="381.5" font-family="Liberation Sans" font-size="13.2" fill="#222">Payout ($)</text>
</svg>
</div>
<!-- data card -->
<div class="abs" style="left:275px;top:673px;width:1350px;height:400px;background:#fff;border-radius:10px;box-shadow:0 1px 3px rgba(0,0,0,0.22)">
  <div class="t" style="left:14px;top:33.5px;font-size:16px;color:#aaa">By:</div>
  <div class="t" style="left:47px;top:31px;font-size:18px;color:#333">Day</div>
  <div class="abs" style="left:45px;top:57px;width:34px;height:2px;background:#00bb00"></div>
  <div class="t" style="left:101px;top:31px;font-size:18px;color:#333">Country</div>
  <div class="abs" style="left:99px;top:57px;width:67px;height:2px;background:#e9e9e9"></div>
  <div class="t" style="left:188px;top:31px;font-size:18px;color:#333">Offer</div>
  <div class="abs" style="left:185px;top:57px;width:46px;height:2px;background:#e9e9e9"></div>
  <div class="t" style="left:252px;top:31px;font-size:18px;color:#333">Device</div>
  <div class="abs" style="left:249px;top:57px;width:59px;height:2px;background:#e9e9e9"></div>
  <div class="t" style="left:330px;top:31px;font-size:18px;color:#333">Vertical</div>
  <div class="abs" style="left:327px;top:57px;width:65px;height:2px;background:#e9e9e9"></div>
  <svg class="abs" style="left:416px;top:29px" width="16" height="16" viewBox="0 0 16 16"><path d="M8 1V15M1 8H15" stroke="#00b800" stroke-width="2"/></svg>
  <div class="t" style="left:443px;top:29.5px;font-size:15.6px;color:#00b800">MORE DATA OPTIONS</div>
  <!-- inner card -->
  <div class="abs" style="left:14px;top:70px;width:1322px;height:400px;background:#fff;border-radius:8px;box-shadow:0 0 3px rgba(0,0,0,0.2)">
    <div class="t" style="left:15px;top:22px;font-size:13.7px;color:#333">From: 2025-08-01 to 2025-11-19</div>
    <svg class="abs" style="left:1198px;top:12px" width="16" height="18" viewBox="0 0 16 18"><path d="M5 1H11V7H14.5L8 13.5 1.5 7H5Z" fill="#00bb00"/><rect x="1.5" y="15.5" width="13" height="2" fill="#00bb00"/></svg>
    <div class="t" style="left:1226px;top:14px;font-size:13.3px;color:#333;letter-spacing:-0.5px">EXPORT CSV</div>
  </div>
</div>

<div class="t" style="left:437px;top:822.39px;font-size:12.3px;color:#9a9a9a">Date</div>
<svg class="abs" style="left:474px;top:821px" width="14" height="13" viewBox="0 0 14 13"><path d="M7 1V12M2 7L7 12L12 7" fill="none" stroke="#999" stroke-width="1.5"/></svg>
<div class="t" style="left:352.4px;width:400px;text-align:right;top:821.67px;font-size:12.2px;color:#9a9a9a">Clicks</div>
<div class="t" style="left:466.29999999999995px;width:400px;text-align:right;top:821.67px;font-size:12.2px;color:#9a9a9a">EPC</div>
<div class="t" style="left:652.9000000000001px;width:400px;text-align:right;top:821.67px;font-size:12.2px;color:#9a9a9a">All Conversions</div>
<div class="t" style="left:867.9000000000001px;width:400px;text-align:right;top:821.67px;font-size:12.2px;color:#9a9a9a">Paid Conversions</div>
<div class="t" style="left:1024.2px;width:400px;text-align:right;top:821.67px;font-size:12.2px;color:#9a9a9a">CPA</div>
<div class="t" style="left:1174.9px;width:400px;text-align:right;top:821.67px;font-size:12.2px;color:#9a9a9a">Payout</div>
<svg class="abs" style="left:1283px;top:819px" width="13" height="13" viewBox="0 0 13 13"><circle cx="6.5" cy="6.5" r="5.2" fill="none" stroke="#555" stroke-width="1.1"/><path d="M6.5 5.6V9.6" stroke="#555" stroke-width="1.3"/><circle cx="6.5" cy="3.8" r="0.8" fill="#555"/></svg>
<div class="abs" style="left:289px;top:855px;width:1322px;height:32px;background:#efefef;border-top:1px solid #d9d9d9;border-bottom:1px solid #d9d9d9"></div>
<div class="t" style="left:330.5px;top:863.95px;font-size:14px;font-weight:bold;color:#111;letter-spacing:-0.5px">Totals</div>
<div class="t" style="left:356.20000000000005px;width:400px;text-align:right;top:863.95px;font-size:14px;font-weight:bold;color:#111;letter-spacing:-0.2px">14,980</div>
<div class="t" style="left:470.1px;width:400px;text-align:right;top:863.95px;font-size:14px;font-weight:bold;color:#111;letter-spacing:-0.2px">$0.156</div>
<div class="t" style="left:657px;width:400px;text-align:right;top:863.95px;font-size:14px;font-weight:bold;color:#111;letter-spacing:-0.2px">596</div>
<div class="t" style="left:913.2px;width:400px;text-align:right;top:863.95px;font-size:14px;font-weight:bold;color:#111;letter-spacing:-0.2px">561</div>
<div class="t" style="left:1028.5px;width:400px;text-align:right;top:863.95px;font-size:14px;font-weight:bold;color:#111;letter-spacing:-0.2px">$4.150</div>
<div class="t" style="left:1169.5px;width:400px;text-align:right;top:863.95px;font-size:14px;font-weight:bold;color:#111;letter-spacing:-0.2px">$2,329.24</div>
<div class="abs" style="left:330px;top:902px;width:20px;height:20px;border:2px solid #555;border-radius:2px"></div>
<div class="t" style="left:427px;top:905.15px;font-size:14px;color:#111">2025-11-19</div>
<svg class="abs" style="left:517px;top:903px" width="22" height="18" viewBox="0 0 22 18"><path d="M0.3 9 L5.8 1 H19.3 C20.4 1 21 1.6 21 2.7 V15.3 C21 16.4 20.4 17 19.3 17 H5.8Z" fill="#00bb00"/><rect x="6.6" y="8" width="2.4" height="2.2" fill="#fff"/><rect x="10.8" y="8" width="2.4" height="2.2" fill="#fff"/><rect x="15" y="8" width="2.4" height="2.2" fill="#fff"/></svg>
<div class="t" style="left:356.20000000000005px;width:400px;text-align:right;top:903.15px;font-size:14px;color:#111">86</div>
<div class="t" style="left:470.1px;width:400px;text-align:right;top:903.15px;font-size:14px;color:#111">$0.167</div>
<div class="t" style="left:657px;width:400px;text-align:right;top:903.15px;font-size:14px;color:#111">2</div>
<div class="t" style="left:913.2px;width:400px;text-align:right;top:903.15px;font-size:14px;color:#111">2</div>
<div class="t" style="left:1028.5px;width:400px;text-align:right;top:903.15px;font-size:14px;color:#111">$7.180</div>
<div class="t" style="left:1169.5px;width:400px;text-align:right;top:903.15px;font-size:14px;color:#111">$14.36</div>
<div class="abs" style="left:289px;top:933px;width:1322px;height:1px;background:#d9d9d9"></div>
<div class="abs" style="left:330px;top:948px;width:20px;height:20px;border:2px solid #555;border-radius:2px"></div>
<div class="t" style="left:427px;top:951.15px;font-size:14px;color:#111">2025-11-18</div>
<svg class="abs" style="left:517px;top:949px" width="22" height="18" viewBox="0 0 22 18"><path d="M0.3 9 L5.8 1 H19.3 C20.4 1 21 1.6 21 2.7 V15.3 C21 16.4 20.4 17 19.3 17 H5.8Z" fill="#00bb00"/><rect x="6.6" y="8" width="2.4" height="2.2" fill="#fff"/><rect x="10.8" y="8" width="2.4" height="2.2" fill="#fff"/><rect x="15" y="8" width="2.4" height="2.2" fill="#fff"/></svg>
<div class="t" style="left:356.20000000000005px;width:400px;text-align:right;top:949.15px;font-size:14px;color:#111">292</div>
<div class="t" style="left:470.1px;width:400px;text-align:right;top:949.15px;font-size:14px;color:#111">$0.148</div>
<div class="t" style="left:657px;width:400px;text-align:right;top:949.15px;font-size:14px;color:#111">6</div>
<div class="t" style="left:913.2px;width:400px;text-align:right;top:949.15px;font-size:14px;color:#111">6</div>
<div class="t" style="left:1028.5px;width:400px;text-align:right;top:949.15px;font-size:14px;color:#111">$7.180</div>
<div class="t" style="left:1169.5px;width:400px;text-align:right;top:949.15px;font-size:14px;color:#111">$43.08</div>
<div class="abs" style="left:289px;top:979px;width:1322px;height:1px;background:#d9d9d9"></div>
<div class="abs" style="left:330px;top:994px;width:20px;height:20px;border:2px solid #555;border-radius:2px"></div>
<div class="t" style="left:427px;top:997.15px;font-size:14px;color:#111">2025-11-17</div>
<svg class="abs" style="left:517px;top:995px" width="22" height="18" viewBox="0 0 22 18"><path d="M0.3 9 L5.8 1 H19.3 C20.4 1 21 1.6 21 2.7 V15.3 C21 16.4 20.4 17 19.3 17 H5.8Z" fill="#00bb00"/><rect x="6.6" y="8" width="2.4" height="2.2" fill="#fff"/><rect x="10.8" y="8" width="2.4" height="2.2" fill="#fff"/><rect x="15" y="8" width="2.4" height="2.2" fill="#fff"/></svg>
<div class="t" style="left:356.20000000000005px;width:400px;text-align:right;top:995.15px;font-size:14px;color:#111">205</div>
<div class="t" style="left:470.1px;width:400px;text-align:right;top:995.15px;font-size:14px;color:#111">$0.175</div>
<div class="t" style="left:657px;width:400px;text-align:right;top:995.15px;font-size:14px;color:#111">6</div>
<div class="t" style="left:913.2px;width:400px;text-align:right;top:995.15px;font-size:14px;color:#111">6</div>
<div class="t" style="left:1028.5px;width:400px;text-align:right;top:995.15px;font-size:14px;color:#111">$0.000</div>
<div class="t" style="left:1169.5px;width:400px;text-align:right;top:995.15px;font-size:14px;color:#111">$35.91</div>
<div class="abs" style="left:289px;top:1025px;width:1322px;height:1px;background:#d9d9d9"></div>
<div id="task">
  <svg class="abs" style="left:16px;top:12px" width="17" height="17" viewBox="0 0 17 17"><path d="M0 2.3L7 1.3V8H0Z M8 1.1L17 0V8H8Z M0 9H7V15.7L0 14.7Z M8 9H17V17L8 15.9Z" fill="#fff"/></svg>
  <div class="abs" style="left:48px;top:0;width:287px;height:40px;background:#f0f0f0;border:1px solid #cfcfcf;border-bottom:none"></div>
  <svg class="abs" style="left:59px;top:13px" width="18" height="17" viewBox="0 0 18 17"><circle cx="11" cy="6.5" r="5" fill="none" stroke="#222" stroke-width="1.3"/><path d="M7.3 10.2L1 16.5" stroke="#222" stroke-width="1.4"/></svg>
  <div class="t" style="left:88px;top:14px;font-size:14.5px;color:#1a1a1a">Type here to search</div>
  <svg class="abs" style="left:351px;top:13px" width="18" height="16" viewBox="0 0 18 16"><path d="M1 1H13M1 15H13M3 4H11V12H3Z M15 1V15" fill="none" stroke="#fff" stroke-width="1.3"/><rect x="14" y="5" width="3" height="3" fill="#fff"/></svg>
  <svg class="abs" style="left:398px;top:7px" width="26" height="26" viewBox="0 0 26 26"><defs><linearGradient id="eg" x1="0.1" y1="0.9" x2="0.9" y2="0.1"><stop offset="0" stop-color="#0b4fa0"/><stop offset="0.45" stop-color="#1b86d6"/><stop offset="0.75" stop-color="#36b9d8"/><stop offset="1" stop-color="#6cd66a"/></linearGradient></defs><circle cx="13" cy="13" r="12" fill="url(#eg)"/><path d="M10 15.5 C10 12.5 13 11 16 11.5 C20 12 23 14.5 24.8 16 C24 18 22.5 19 21 19 C19 19 17 17.5 15 16.5 C13.5 15.8 11.5 16 10 17Z" fill="#2f2d23"/><path d="M3 17 C5 22 10 25 15 25 C11 23 9.5 20 10 17 C8 18.5 5 18.5 3 17Z" fill="#0d3f8a"/></svg>
  <svg class="abs" style="left:449px;top:10px" width="22" height="20" viewBox="0 0 22 20"><path d="M0 2 H8 L10 4 H22 V19 H0Z" fill="#f5c342"/><path d="M0 6 H22 V19 H0Z" fill="#ffd767"/><rect x="6" y="11" width="10" height="8" fill="#2a7fd4"/><rect x="8" y="14" width="6" height="5" fill="#ffd767"/></svg>
  <svg class="abs" style="left:497px;top:8px" width="23" height="24" viewBox="0 0 23 24"><path d="M7 6 V4 C7 1 16 1 16 4 V6" fill="none" stroke="#3ba0e8" stroke-width="2"/><rect x="1" y="6" width="21" height="17" rx="2.5" fill="#f4f4f4"/><rect x="7" y="10" width="4" height="4" fill="#f25022"/><rect x="12" y="10" width="4" height="4" fill="#7fba00"/><rect x="7" y="15" width="4" height="4" fill="#00a4ef"/><rect x="12" y="15" width="4" height="4" fill="#ffb900"/></svg>
  <svg class="abs" style="left:545px;top:7px" width="26" height="26" viewBox="0 0 26 26"><g fill="none" stroke="#fff" stroke-width="1.5"><rect x="8.5" y="2.2" width="9" height="21.6" rx="4.5" transform="rotate(0 13 13)"/><rect x="8.5" y="2.2" width="9" height="21.6" rx="4.5" transform="rotate(60 13 13)"/><rect x="8.5" y="2.2" width="9" height="21.6" rx="4.5" transform="rotate(120 13 13)"/></g></svg>
  <div class="abs" style="left:538px;top:38px;width:40px;height:2px;background:#76b9ed"></div>
  <div class="abs" style="left:583px;top:0;width:44px;height:40px;background:rgba(255,255,255,0.14)"></div>
  <div class="abs" style="left:583px;top:38px;width:44px;height:2px;background:#76b9ed"></div>
  <svg class="abs" style="left:595px;top:8px" width="30" height="28" viewBox="0 0 30 28"><path d="M12 12 L2.47 6.5 A11 11 0 0 1 21.53 6.5Z" fill="#e8453c"/><path d="M12 12 L21.53 6.5 A11 11 0 0 1 12 23Z" fill="#f9bb2d"/><path d="M12 12 L12 23 A11 11 0 0 1 2.47 6.5Z" fill="#1ea446"/><circle cx="12" cy="12" r="5.2" fill="#fff"/><circle cx="12" cy="12" r="4.2" fill="#4a8af4"/><circle cx="18.2" cy="18" r="7.6" fill="#fff"/><circle cx="18.2" cy="18" r="6.3" fill="#dfe9fb" stroke="#1a5fd6" stroke-width="1.3"/><circle cx="18.2" cy="16.4" r="1.9" fill="none" stroke="#1a5fd6" stroke-width="1.3"/><path d="M14.6 21.6 C15.8 19.5 20.6 19.5 21.8 21.6" fill="none" stroke="#1a5fd6" stroke-width="1.3"/></svg>
  <div class="abs" style="left:627px;top:0;width:1px;height:40px;background:rgba(0,0,0,0.35)"></div>
  <div class="abs" style="left:635px;top:38px;width:41px;height:2px;background:#76b9ed"></div>
  <svg class="abs" style="left:646px;top:10px" width="26" height="26" viewBox="0 0 26 26"><rect x="1" y="1" width="17.5" height="17.5" rx="4" fill="#141210"/><path d="M5 6 L10 3.5 L15 6 L10 8.5Z" fill="#d8d8d8"/><path d="M5 6 L10 8.5 V14.5 L5 12Z" fill="#8a8a8a"/><path d="M15 6 L10 8.5 V14.5 L15 12Z" fill="#b0b0b0"/><circle cx="16" cy="16" r="7.6" fill="#1e1f2e"/></svg>
  <div class="t" style="left:657.5px;top:19.5px;font:bold 12px 'Liberation Sans',sans-serif;color:#fff">1</div>
  <!-- tray -->
  <svg class="abs" style="left:1306px;top:13px" width="26" height="16" viewBox="0 0 26 16"><path d="M5 15 C2 15 0.5 13 0.5 11 C0.5 8.5 2.5 7 5 7 C5.5 3.5 8.5 1 12.5 1 C16.5 1 19 3.5 19.5 6.5 C23 6.5 25.5 8.5 25.5 11 C25.5 13.5 23.5 15 21 15Z" fill="#8fb8ee"/><path d="M5 15 C2 15 0.5 13 0.5 11 H25.5 C25.5 13.5 23.5 15 21 15Z" fill="#6b9ce0"/></svg>
  <div class="t" style="left:1339px;top:15px;font-size:14px;color:#f0f0f0">2°C&nbsp; Cloudy</div>
  <svg class="abs" style="left:1436px;top:16px" width="14" height="9" viewBox="0 0 14 9"><path d="M1 8 L7 2 L13 8" fill="none" stroke="#fff" stroke-width="1.3"/></svg>
  <svg class="abs" style="left:1458px;top:11px" width="20" height="20" viewBox="0 0 20 20"><path d="M1 4 L17 2 V15 L1 17Z" fill="none" stroke="#fff" stroke-width="1.2"/><path d="M6 11 C6 8 9 7 11 8 M12 9 C12 11 10 13 7 12" fill="none" stroke="#fff" stroke-width="1.1"/><circle cx="14.5" cy="15.5" r="3.5" fill="#f7931e"/></svg>
  <svg class="abs" style="left:1482px;top:12px" width="18" height="17" viewBox="0 0 18 17"><rect x="1" y="4" width="16" height="9" fill="none" stroke="#fff" stroke-width="1.2"/><path d="M9 13V16M5 16H13" stroke="#fff" stroke-width="1.2"/><rect x="1" y="1" width="5" height="4" fill="#2b2720" stroke="#fff" stroke-width="1"/></svg>
  <svg class="abs" style="left:1506px;top:13px" width="16" height="15" viewBox="0 0 16 15"><path d="M1 5H4L8 1.5V13.5L4 10H1Z" fill="none" stroke="#fff" stroke-width="1.2"/><path d="M10.5 5L15 10M15 5L10.5 10" stroke="#fff" stroke-width="1.2"/></svg>
  <div class="t" style="left:1533px;top:6px;font-size:12px;color:#fff">ENG</div>
  <div class="t" style="left:1536px;top:24px;font-size:12px;color:#fff">LVS</div>
  <div class="t" style="left:1573px;top:6px;font-size:12px;color:#fff">9:18 PM</div>
  <div class="t" style="left:1566px;top:24px;font-size:12px;color:#fff">11/19/2025</div>
  <svg class="abs" style="left:1637px;top:12px" width="19" height="15" viewBox="0 0 19 15"><path d="M1 1H18V11H6L2 14.5V11H1Z" fill="#fff"/><path d="M4 4H15M4 7H13" stroke="#2b2720" stroke-width="1.2"/></svg>
  <div class="abs" style="left:1644px;top:17px;width:21px;height:21px;border-radius:11px;background:#2b2720;border:1.3px solid #777;color:#fff;font:12px 'Liberation Sans';line-height:18px;text-align:center">20</div>
  <div class="abs" id="showdesk" style="left:1675px;top:0;width:1px;height:40px;background:rgba(255,255,255,0.28)"></div>
</div>

<div class="abs" id="side-shadow" style="left:240px;top:201px;width:4px;height:809px;background:linear-gradient(90deg,rgba(0,0,0,0.07),rgba(0,0,0,0))"></div>
<div class="abs" style="left:240px;top:201px;width:1425px;height:7px;background:linear-gradient(rgba(0,0,0,0.25),rgba(0,0,0,0.08) 40%,rgba(0,0,0,0))"></div>
<div class="abs" style="left:1597px;top:942px;width:48px;height:48px;border-radius:24px;background:#00bb00;box-shadow:0 2px 8px rgba(0,0,0,0.25)"></div>
<svg class="abs" style="left:1610px;top:953px" width="23" height="26" viewBox="0 0 23 26"><path d="M3.5 1 H19.5 C20.9 1 22 2.1 22 3.5 V25 L16.5 22 H3.5 C2.1 22 1 20.9 1 19.5 V3.5 C1 2.1 2.1 1 3.5 1Z" fill="#fff"/><path d="M4.5 15.5 C9 19 14 19 18.5 15.5" fill="none" stroke="#00bb00" stroke-width="1.5"/></svg>
<div class="abs" style="left:1638px;top:942px;width:16px;height:16px;border-radius:8px;background:#d9262b;color:#fff;font:bold 11px 'Liberation Sans';line-height:16px;text-align:center">7</div>
<div class="t" style="left:1371px;top:920px;font-size:19.5px;color:rgba(120,120,120,0.5);letter-spacing:0.1px">Activate Windows</div>
<div class="t" style="left:1371px;top:945px;font-size:14.5px;color:rgba(120,120,120,0.5);letter-spacing:0.42px">Go to Settings to activate Windows.</div>

</body></html>
